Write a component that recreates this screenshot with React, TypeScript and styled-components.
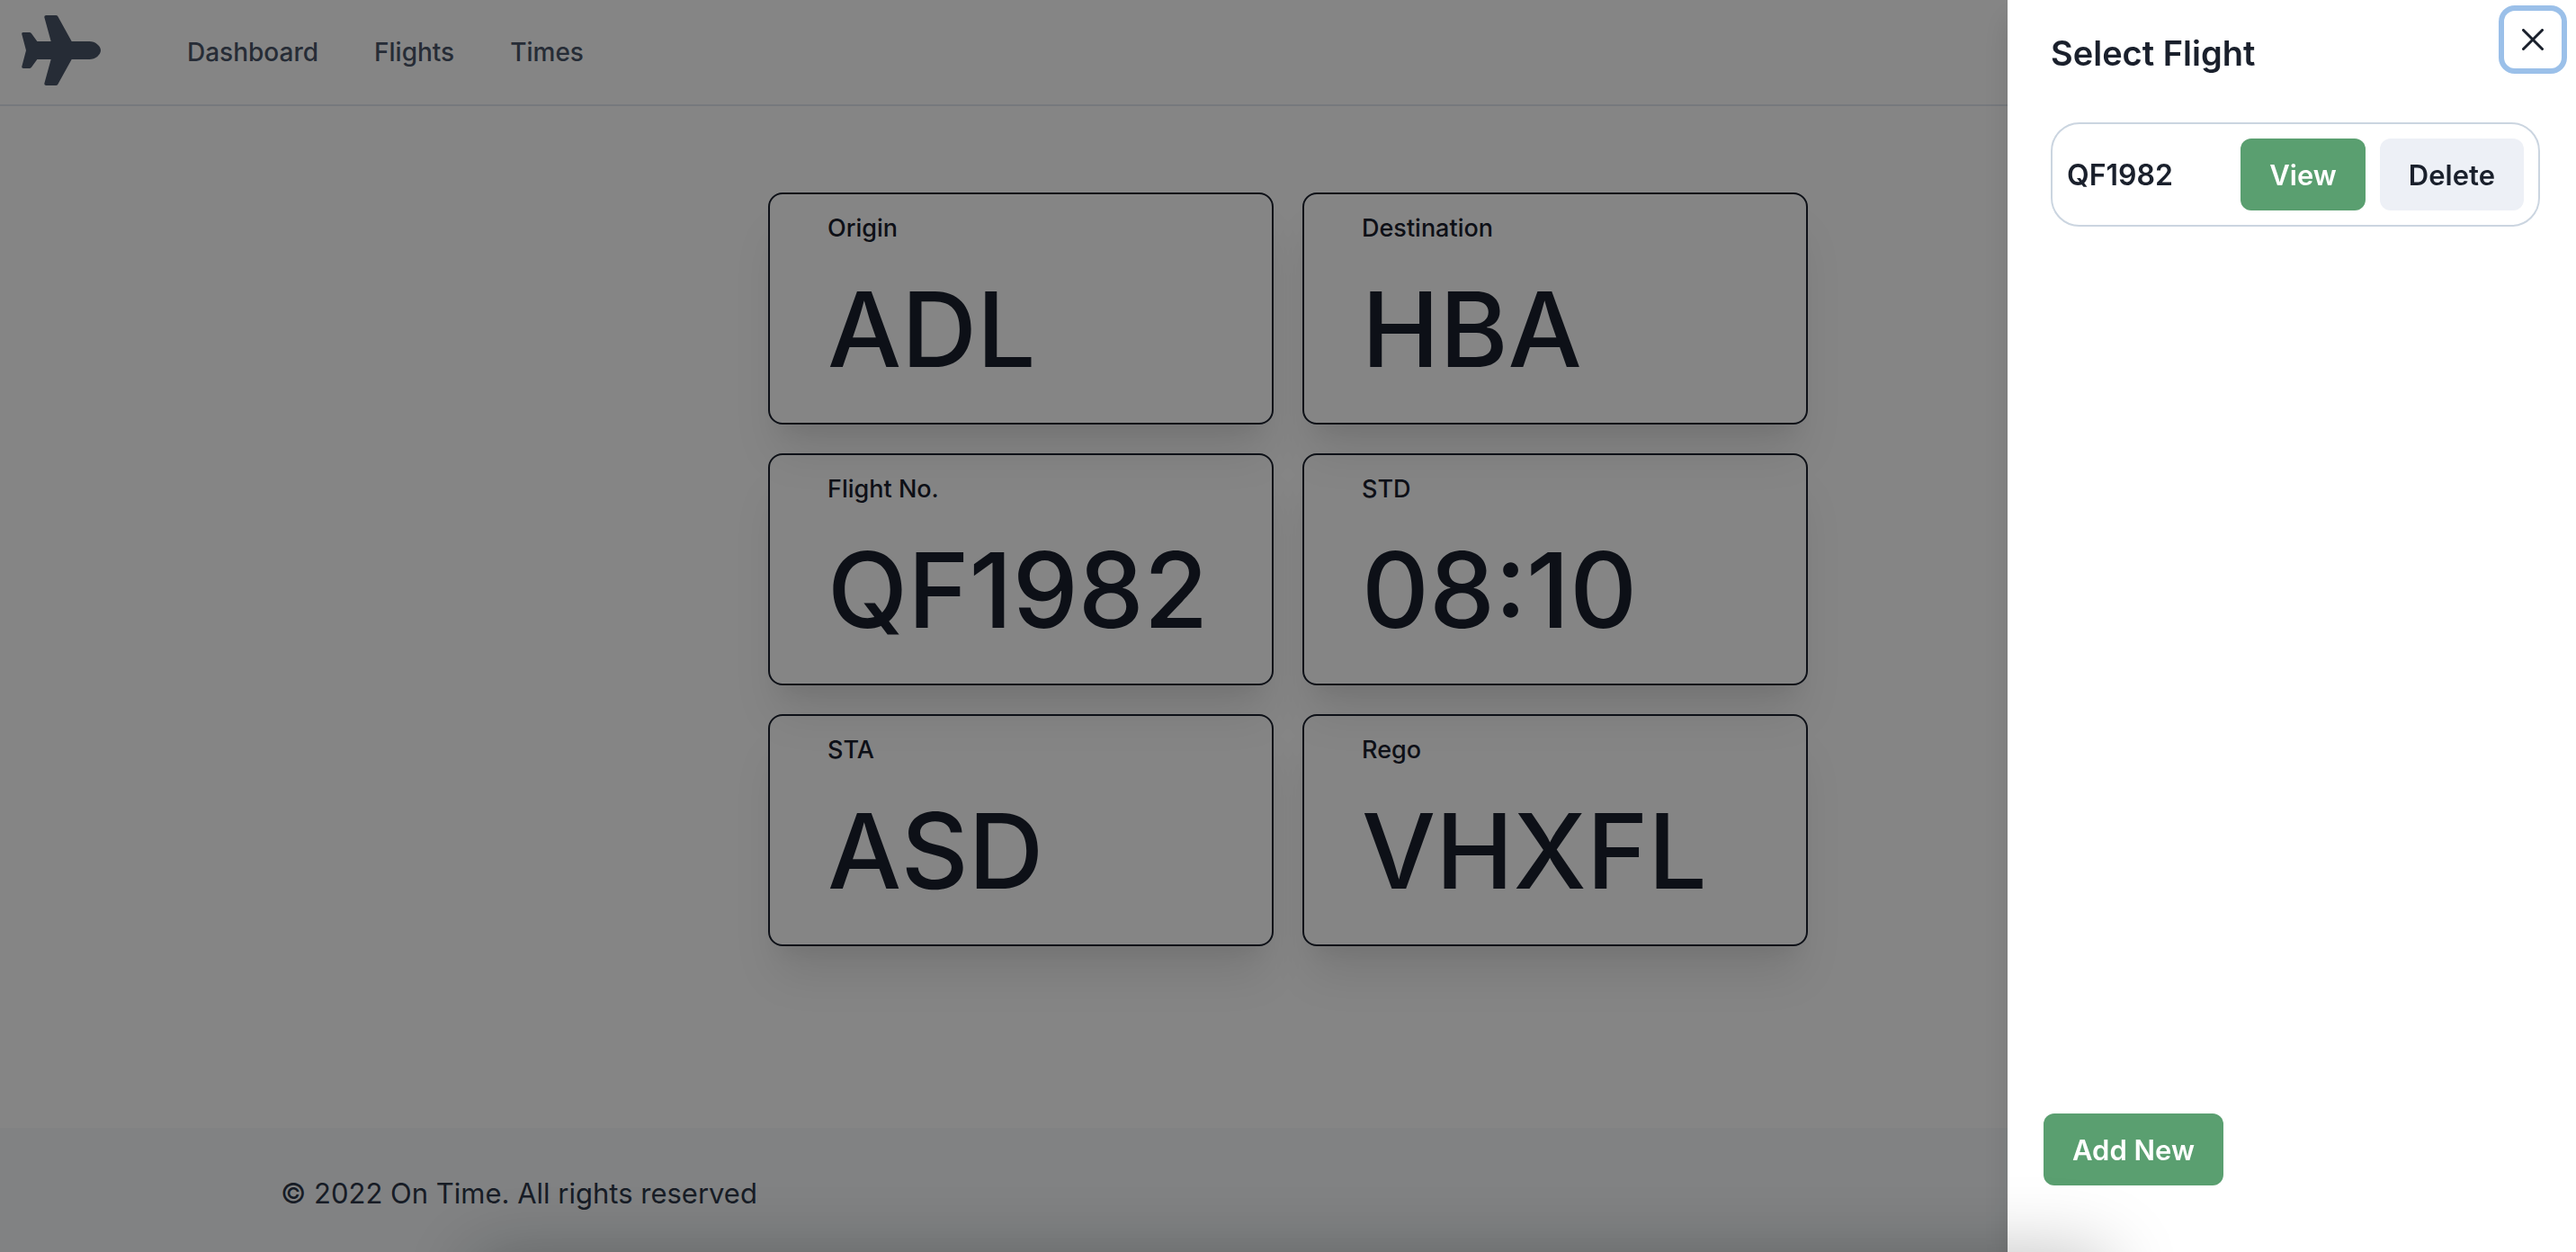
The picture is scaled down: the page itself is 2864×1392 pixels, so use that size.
import React from "react";
import styled, { createGlobalStyle } from "styled-components";

const GlobalStyle = createGlobalStyle`
  *, *::before, *::after { box-sizing: border-box; }
  body {
    margin: 0;
    background: #ffffff;
    color: #1a202c;
    font-family: Inter, "Liberation Sans", sans-serif;
    font-size: 31px;
    line-height: 48px;
    overflow: hidden;
  }
  h2, p, dl, dt, dd, ul { margin: 0; padding: 0; }
`;

const Page = styled.div`
  display: flex;
  flex-direction: column;
  min-height: 100vh;
`;

const Header = styled.header`
  display: flex;
  align-items: center;
  gap: 96px;
  height: 118px;
  padding: 0 24px;
  border-bottom: 2px solid #e2e8f0;
`;

const Logo = styled.svg`
  display: block;
  width: 88px;
  height: 78px;
  margin-bottom: 4px;
  fill: #4a5568;
`;

const Nav = styled.nav`
  display: flex;
  gap: 62px;
`;

const NavLink = styled.a`
  color: #4a5568;
  font-size: 28px;
  line-height: 42px;
  font-weight: 500;
  text-decoration: none;
`;

const Main = styled.main`
  flex: 1;
  padding: 96px 32px;
`;

const StatGrid = styled.dl`
  display: grid;
  grid-template-columns: 1fr 1fr;
  gap: 32px;
  max-width: 1156px;
  margin: 0 auto;
`;

const StatCard = styled.div`
  padding: 16px 64px 14px;
  border: 2px solid #1a202c;
  border-radius: 16px;
  box-shadow: 0 40px 50px -10px rgba(0, 0, 0, 0.1), 0 20px 20px -10px rgba(0, 0, 0, 0.04);
`;

const StatLabel = styled.dt`
  font-size: 27px;
  line-height: 44px;
  font-weight: 500;
`;

const StatValue = styled.dd`
  font-size: 116px;
  line-height: 180px;
  font-weight: 500;
`;

const Footer = styled.footer`
  padding: 49px 0 41px;
  background: #f7fafc;
  color: #2d3748;
`;

const FooterInner = styled.div`
  max-width: 2304px;
  margin: 0 auto;
  padding: 0 32px;
`;

const Overlay = styled.div`
  position: fixed;
  inset: 0;
  background: rgba(0, 0, 0, 0.48);
`;

const Drawer = styled.aside`
  position: fixed;
  top: 0;
  right: 0;
  bottom: 0;
  display: flex;
  flex-direction: column;
  width: 632px;
  max-width: 100%;
  background: #ffffff;
  box-shadow: 0 20px 30px rgba(0, 0, 0, 0.12);
`;

const DrawerHeader = styled.div`
  display: flex;
  justify-content: space-between;
  align-items: flex-start;
  padding: 12px 16px 28px 48px;
`;

const DrawerTitle = styled.h2`
  padding-top: 20px;
  font-size: 38px;
  line-height: 54px;
  font-weight: 600;
`;

const CloseButton = styled.button`
  display: flex;
  align-items: center;
  justify-content: center;
  width: 64px;
  height: 64px;
  padding: 0;
  border: 0;
  border-radius: 12px;
  background: #ffffff;
  box-shadow: 0 0 0 6px #9bc0e9;
  color: #1a202c;
`;

const CloseIcon = styled.svg`
  width: 24px;
  height: 24px;
  fill: currentColor;
`;

const DrawerBody = styled.div`
  flex: 1;
  padding: 22px 40px 16px 48px;
`;

const FlightList = styled.ul`
  list-style: none;
`;

const FlightRow = styled.li`
  display: flex;
  align-items: center;
  gap: 16px;
  padding: 16px;
  border: 2px solid #cbd5e0;
  border-radius: 32px;
`;

const FlightName = styled.span`
  flex: 1;
  padding-top: 2px;
  font-size: 32px;
  font-weight: 600;
`;

const Button = styled.button<{ $primary?: boolean }>`
  height: 80px;
  padding: 2px 32px 0;
  border: 0;
  border-radius: 12px;
  background: ${(p) => (p.$primary ? "#5a9f70" : "#edf0f6")};
  color: ${(p) => (p.$primary ? "#ffffff" : "#1a202c")};
  font-family: inherit;
  font-size: 31px;
  line-height: 48px;
  font-weight: 600;
`;

const DrawerFooter = styled.div`
  padding: 32px 40px 74px;
`;

const BottomShade = styled.div`
  position: fixed;
  top: 100%;
  left: 520px;
  right: 520px;
  height: 80px;
  border-radius: 24px;
  box-shadow: 0 0 80px rgba(0, 0, 0, 0.25);
  pointer-events: none;
`;

const stats = [
  { label: "Origin", value: "ADL" },
  { label: "Destination", value: "HBA" },
  { label: "Flight No.", value: "QF1982" },
  { label: "STD", value: "08:10" },
  { label: "STA", value: "ASD" },
  { label: "Rego", value: "VHXFL" },
];

const links = ["Dashboard", "Flights", "Times"];
const flights = ["QF1982"];

export default function App() {
  return (
    <>
      <GlobalStyle />
      <Page>
        <Header>
          <Logo viewBox="72 51 264 234" aria-label="On Time" role="img">
            <path d="M154 51H186Q191 51 193 55L239 138H298C318 138 336 153 336 168C336 183 318 198 298 198H239L193 281Q191 285 186 285H154Q147 285 148 278L170 198H124L105 224Q102 228 98 228H78Q71 228 73 221L87 168L73 115Q71 108 78 108H98Q102 108 105 112L124 138H170L148 58Q147 51 154 51Z" />
          </Logo>
          <Nav>
            {links.map((name) => (
              <NavLink key={name} href="#">{name}</NavLink>
            ))}
          </Nav>
        </Header>
        <Main>
          <StatGrid>
            {stats.map((s) => (
              <StatCard key={s.label}>
                <StatLabel>{s.label}</StatLabel>
                <StatValue>{s.value}</StatValue>
              </StatCard>
            ))}
          </StatGrid>
        </Main>
        <Footer>
          <FooterInner>
            <p>© 2022 On Time. All rights reserved</p>
          </FooterInner>
        </Footer>
      </Page>
      <Overlay />
      <Drawer role="dialog" aria-labelledby="drawer-title">
        <DrawerHeader>
          <DrawerTitle id="drawer-title">Select Flight</DrawerTitle>
          <CloseButton type="button" aria-label="Close">
            <CloseIcon viewBox="0 0 24 24" aria-hidden="true">
              <path d="M.439,21.44a1.5,1.5,0,0,0,2.122,2.121L11.823,14.3a.25.25,0,0,1,.354,0l9.262,9.263a1.5,1.5,0,1,0,2.122-2.121L14.3,12.177a.25.25,0,0,1,0-.354l9.263-9.262A1.5,1.5,0,0,0,21.439.44L12.177,9.7a.25.25,0,0,1-.354,0L2.561.44A1.5,1.5,0,0,0,.439,2.561L9.7,11.823a.25.25,0,0,1,0,.354Z" />
            </CloseIcon>
          </CloseButton>
        </DrawerHeader>
        <DrawerBody>
          <FlightList>
            {flights.map((f) => (
              <FlightRow key={f}>
                <FlightName>{f}</FlightName>
                <Button type="button" $primary>View</Button>
                <Button type="button">Delete</Button>
              </FlightRow>
            ))}
          </FlightList>
        </DrawerBody>
        <DrawerFooter>
          <Button type="button" $primary>Add New</Button>
        </DrawerFooter>
      </Drawer>
      <BottomShade />
    </>
  );
}
